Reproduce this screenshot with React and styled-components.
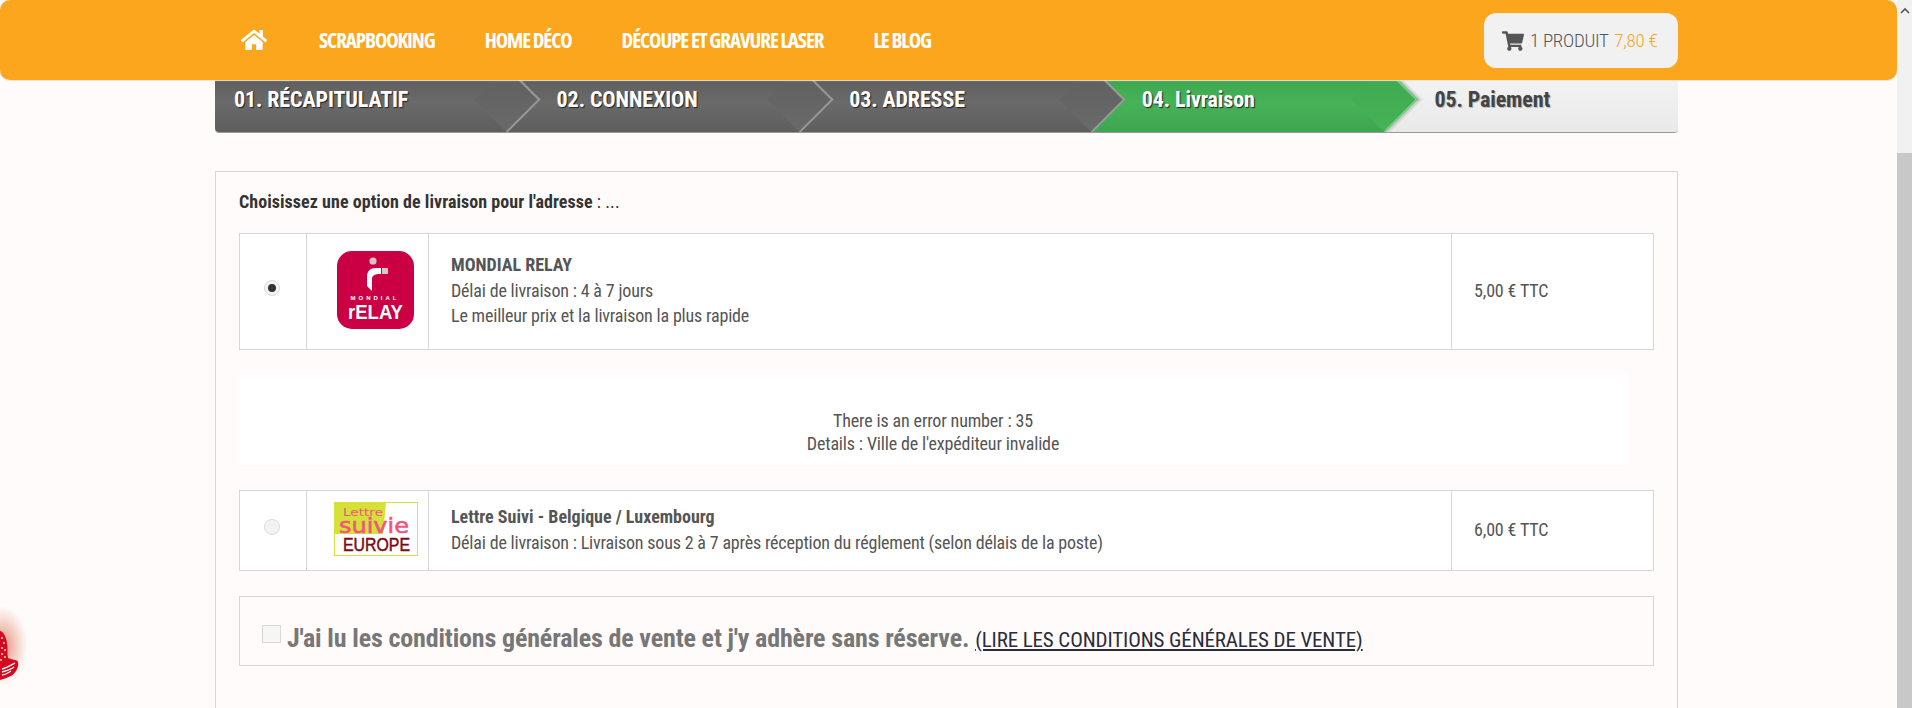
import styled, { createGlobalStyle } from "styled-components";
import { FaHome, FaShoppingCart } from "react-icons/fa";

const GlobalStyle = createGlobalStyle`
  html, body {
    margin: 0;
    height: 708px;
    overflow: hidden;
    background: #fefbfa;
    font-family: Roboto, "Liberation Sans", Arial, sans-serif;
    font-stretch: 75%;
  }
`;

const Page = styled.div`
  display: flex;
  height: 708px;
  overflow: hidden;
`;

const Main = styled.div`
  flex: 1;
  position: relative;
  min-width: 0;
`;

const Header = styled.header`
  position: absolute;
  top: 0;
  left: 0;
  right: 0;
  z-index: 20;
  height: 80px;
  box-sizing: border-box;
  padding: 0 219px 0 241px;
  display: flex;
  align-items: center;
  background: #fca61d;
  border-radius: 10px;
  box-shadow: 0 1px 1px #e4e2e1;
`;

const Nav = styled.nav`
  display: flex;
  align-items: center;
  gap: 50px;
  flex: 1;
`;

const NavLink = styled.a`
  color: #fff;
  font-family: "Open Sans", Roboto, sans-serif;
  font-size: 21px;
  font-weight: 700;
  letter-spacing: -1.1px;
  text-transform: uppercase;
  line-height: 24px;
  white-space: nowrap;
`;

const HomeLink = styled.a`
  color: #fff;
  display: flex;
  margin-right: 2px;
  font-size: 26px;
`;

const CartBox = styled.div`
  width: 194px;
  height: 55px;
  margin-top: 1px;
  box-sizing: border-box;
  padding-left: 18px;
  display: flex;
  align-items: center;
  gap: 6px;
  background: #f1f1f1;
  border-radius: 12px;
  color: #555;
  font-size: 19px;
  font-weight: 300;
  letter-spacing: -0.3px;
  white-space: nowrap;
`;

const CartPrice = styled.span`
  color: #fca61d;
  margin-left: 2px;
`;

const Content = styled.main`
  padding: 66px 219px 0 215px;
`;

const Steps = styled.ol`
  display: flex;
  list-style: none;
  margin: 0 0 38px;
  padding: 0;
  height: 66px;
  border-radius: 0 0 4px 4px;
  border-bottom: 1px solid #999;
  box-sizing: content-box;
`;

const Step = styled.li`
  flex: none;
  width: 20%;
  position: relative;
  z-index: ${(p) => 5 - p.$index};
  box-sizing: border-box;
  display: flex;
  align-items: center;
  padding-top: 1px;
  padding-left: ${(p) => (p.$index === 0 ? 19 : 49)}px;
  font-size: 22px;
  font-weight: 700;
  letter-spacing: -0.1px;
  white-space: nowrap;
  background: ${(p) =>
    p.$state === "done"
      ? "linear-gradient(#585858, #6a6a6a 55%, #5e5e5e)"
      : p.$state === "current"
        ? "linear-gradient(#38a04a, #46b357 55%, #3ea551)"
        : "linear-gradient(#f5f5f5, #e9e9e9)"};
  color: ${(p) => (p.$state === "todo" ? "#444" : "#fff")};
  text-shadow: ${(p) =>
    p.$state === "todo" ? "1px 1px 0 #bbb" : "1px 1px 1px #222"};
  border-radius: ${(p) =>
    p.$index === 0 ? "0 0 0 4px" : p.$index === 4 ? "0 0 4px 0" : "0"};

  &::after {
    content: "";
    display: ${(p) => (p.$index === 4 ? "none" : "block")};
    position: absolute;
    top: 9.7px;
    right: -23.3px;
    width: 46.6px;
    height: 46.6px;
    transform: rotate(45deg);
    background: ${(p) =>
      p.$state === "current"
        ? "linear-gradient(135deg, #3ea84f, #46b357)"
        : "linear-gradient(135deg, #5f5f5f, #6a6a6a)"};
    border-top: 2px solid ${(p) => (p.$state === "current" ? "#76c886" : "#999")};
    border-right: 2px solid ${(p) => (p.$state === "current" ? "#76c886" : "#999")};
    box-sizing: border-box;
    box-shadow: 2px -2px 2px ${(p) => (p.$state === "current" ? "#c9c9c9" : "transparent")};
  }
`;

const Panel = styled.section`
  border: 1px solid #d6d6d6;
  border-bottom: none;
  height: 600px;
  box-sizing: border-box;
  padding: 0 23px;
`;

const Intro = styled.p`
  margin: 0;
  padding-top: 20px;
  height: 61px;
  box-sizing: border-box;
  font-size: 18px;
  font-weight: 700;
  letter-spacing: 0.05px;
  line-height: 20px;
  color: #333;

  span {
    font-weight: 400;
  }
`;

const Carrier = styled.div`
  display: grid;
  grid-template-columns: 66px 122px 1fr 202px;
  box-sizing: border-box;
  height: ${(p) => p.$height}px;
  border: 1px solid #d6d6d6;
  background: #fff;
  color: #555;
`;

const Cell = styled.div`
  display: flex;
  align-items: center;
  justify-content: ${(p) => (p.$center ? "center" : "flex-start")};
  border-left: ${(p) => (p.$first ? "none" : "1px solid #d6d6d6")};
  padding-left: ${(p) => p.$pad || 0}px;
`;

const Radio = styled.span`
  width: 16px;
  height: 16px;
  margin: 0 2px 8px 0;
  border-radius: 50%;
  background: #f3f3f3;
  border: 1px solid #dadada;
  box-sizing: border-box;
  display: flex;
  align-items: center;
  justify-content: center;

  &::after {
    content: "";
    width: 8px;
    height: 8px;
    border-radius: 50%;
    background: ${(p) => (p.$checked ? "#333" : "transparent")};
  }
`;

const Details = styled.div`
  font-size: 18px;
  letter-spacing: -0.18px;
  line-height: 25.5px;
  color: #555;
  margin-bottom: 2px;
  white-space: nowrap;
`;

const CarrierName = styled.div`
  font-weight: 700;
  letter-spacing: 0;
`;

const Price = styled.span`
  font-size: 18px;
  letter-spacing: -0.15px;
  color: #555;
  margin-bottom: 2px;
`;

const LogoSlot = styled.span`
  display: flex;
  margin-bottom: 3px;
`;

const ErrorBox = styled.div`
  margin: 24px 27px 25px 0;
  height: 91px;
  box-sizing: border-box;
  padding-top: 35px;
  background: #fff;
  text-align: center;
  font-size: 18px;
  letter-spacing: -0.15px;
  line-height: 23px;
  color: #555;
`;

const Terms = styled.div`
  margin-top: 25px;
  height: 70px;
  box-sizing: border-box;
  border: 1px solid #d6d6d6;
  padding: 13px 0 0 22px;
  display: flex;
  align-items: center;
  gap: 6px;
  font-size: 26px;
  font-weight: 700;
  letter-spacing: -0.15px;
  color: #777;
  white-space: nowrap;
`;

const TermsBox = styled.span`
  width: 19px;
  height: 18px;
  margin-bottom: 7px;
  box-sizing: border-box;
  border: 1px solid #d8d8d8;
  background: #f6f6f6;
`;

const TermsLink = styled.a`
  font-size: 21px;
  font-weight: 400;
  letter-spacing: -0.12px;
  color: #2b2b3a;
  text-decoration: underline;
`;

const Scrollbar = styled.div`
  width: 15px;
  background: #f1f1f1;
  display: flex;
  flex-direction: column;
  align-items: center;
`;

const ScrollArrow = styled.svg`
  margin-top: 7px;
  height: 146px;
  flex: none;
`;

const ScrollThumb = styled.div`
  align-self: stretch;
  flex: 1;
  background: #c8c8c8;
`;

const Ornament = styled.svg`
  position: absolute;
  left: 0;
  top: 600px;
  z-index: 5;
`;

const RelayLogo = () => (
  <svg width="84" height="84" viewBox="0 0 84 84" role="img" aria-label="Mondial Relay" fontStretch="normal">
    <rect x="3" y="3" width="77" height="78" rx="15" fill="#cb0044" />
    <circle cx="39" cy="13" r="3.6" fill="#d8c4c6" />
    <rect x="48" y="20" width="6" height="6" fill="#dcc7c7" />
    <path d="M47 20h-5c-6 0-9 3-9 9v9l5 5V31c0-3 2-5 9-5z" fill="#fff" />
    <text x="41" y="52" textAnchor="middle" fontFamily="Liberation Sans, sans-serif" fontSize="6" fontWeight="700" letterSpacing="3" fill="#fff">MONDIAL</text>
    <text x="14" y="71" fontFamily="Liberation Sans, sans-serif" fontSize="20" fontWeight="700" fill="#fff" textLength="55" lengthAdjust="spacingAndGlyphs">rELAY</text>
  </svg>
);

const SuiviLogo = () => (
  <svg width="84" height="54" viewBox="0 0 84 54" role="img" aria-label="Lettre suivie Europe" fontStretch="normal">
    <rect x="0.5" y="0.5" width="83" height="53" fill="#fff" stroke="#d9e23c" />
    <path d="M1 1h51l-3 31H1z" fill="#d5e137" />
    <text x="9" y="14" fontFamily="DejaVu Sans, sans-serif" fontSize="10.5" fill="#f2557f" textLength="40" lengthAdjust="spacingAndGlyphs">Lettre</text>
    <text x="5" y="31" fontFamily="DejaVu Sans, sans-serif" fontSize="22" fill="#f2557f" stroke="#f2557f" strokeWidth="0.6" textLength="70" lengthAdjust="spacingAndGlyphs">suivie</text>
    <text x="9" y="49" fontFamily="Liberation Sans, sans-serif" fontSize="18" fill="#7a0c14" stroke="#7a0c14" strokeWidth="0.5" textLength="67" lengthAdjust="spacingAndGlyphs">EUROPE</text>
  </svg>
);

export default function App() {
  return (
    <Page>
      <GlobalStyle />
      <Main>
        <Header>
          <Nav>
            <HomeLink><FaHome /></HomeLink>
            <NavLink>Scrapbooking</NavLink>
            <NavLink>Home déco</NavLink>
            <NavLink>Découpe et gravure laser</NavLink>
            <NavLink>Le blog</NavLink>
          </Nav>
          <CartBox>
            <FaShoppingCart size={22} />
            <span>1 PRODUIT <CartPrice>7,80 €</CartPrice></span>
          </CartBox>
        </Header>
        <Content>
          <Steps>
            <Step $index={0} $state="done">01. RÉCAPITULATIF</Step>
            <Step $index={1} $state="done">02. CONNEXION</Step>
            <Step $index={2} $state="done">03. ADRESSE</Step>
            <Step $index={3} $state="current">04. Livraison</Step>
            <Step $index={4} $state="todo">05. Paiement</Step>
          </Steps>
          <Panel>
            <Intro>Choisissez une option de livraison pour l'adresse <span>: ...</span></Intro>
            <Carrier $height={117}>
              <Cell $first $center><Radio $checked /></Cell>
              <Cell $center $pad={17}><LogoSlot><RelayLogo /></LogoSlot></Cell>
              <Cell $pad={22}>
                <Details>
                  <CarrierName>MONDIAL RELAY</CarrierName>
                  <div>Délai de livraison : 4 à 7 jours</div>
                  <div>Le meilleur prix et la livraison la plus rapide</div>
                </Details>
              </Cell>
              <Cell $pad={22}><Price>5,00 € TTC</Price></Cell>
            </Carrier>
            <ErrorBox>
              <div>There is an error number : 35</div>
              <div>Details : Ville de l'expéditeur invalide</div>
            </ErrorBox>
            <Carrier $height={81}>
              <Cell $first $center><Radio /></Cell>
              <Cell $center $pad={17}><LogoSlot><SuiviLogo /></LogoSlot></Cell>
              <Cell $pad={22}>
                <Details>
                  <CarrierName>Lettre Suivi - Belgique / Luxembourg</CarrierName>
                  <div>Délai de livraison : Livraison sous 2 à 7 après réception du réglement (selon délais de la poste)</div>
                </Details>
              </Cell>
              <Cell $pad={22}><Price>6,00 € TTC</Price></Cell>
            </Carrier>
            <Terms>
              <TermsBox />
              <span>J'ai lu les conditions générales de vente et j'y adhère sans réserve. <TermsLink>(LIRE LES CONDITIONS GÉNÉRALES DE VENTE)</TermsLink></span>
            </Terms>
          </Panel>
        </Content>
        <Ornament width="40" height="90" viewBox="0 0 40 90">
          <defs>
            <radialGradient id="glow">
              <stop offset="0" stopColor="#d9603c" stopOpacity="0.75" />
              <stop offset="0.6" stopColor="#e08a6c" stopOpacity="0.35" />
              <stop offset="1" stopColor="#e2a08a" stopOpacity="0" />
            </radialGradient>
          </defs>
          <ellipse cx="2" cy="46" rx="26" ry="40" fill="url(#glow)" />
          <path d="M0 31c3 0 6 5 7 12 1 6 0 11 1 15 3 2 9 1 10 4 1 5-2 11-7 14-4 2-8 3-11 4z" fill="#d5091f" />
          <g fill="#fbd5d0">
            <circle cx="2" cy="38" r="1" />
            <circle cx="4" cy="43" r="1" />
            <circle cx="2" cy="48" r="1" />
            <circle cx="5" cy="50" r="1" />
            <circle cx="2" cy="54" r="1" />
            <circle cx="5" cy="57" r="1" />
            <circle cx="1" cy="60" r="1" />
          </g>
          <path d="M2 69c4-1 9-4 13-6M2 72c4-1 8-2 12-5M2 75c3 0 6-2 9-4" stroke="#fff" strokeWidth="1.3" fill="none" />
        </Ornament>
      </Main>
      <Scrollbar>
        <ScrollArrow width="10" viewBox="0 0 10 146">
          <path d="M1 6l4-4 4 4" fill="none" stroke="#555" strokeWidth="1.6" />
        </ScrollArrow>
        <ScrollThumb />
      </Scrollbar>
    </Page>
  );
}
